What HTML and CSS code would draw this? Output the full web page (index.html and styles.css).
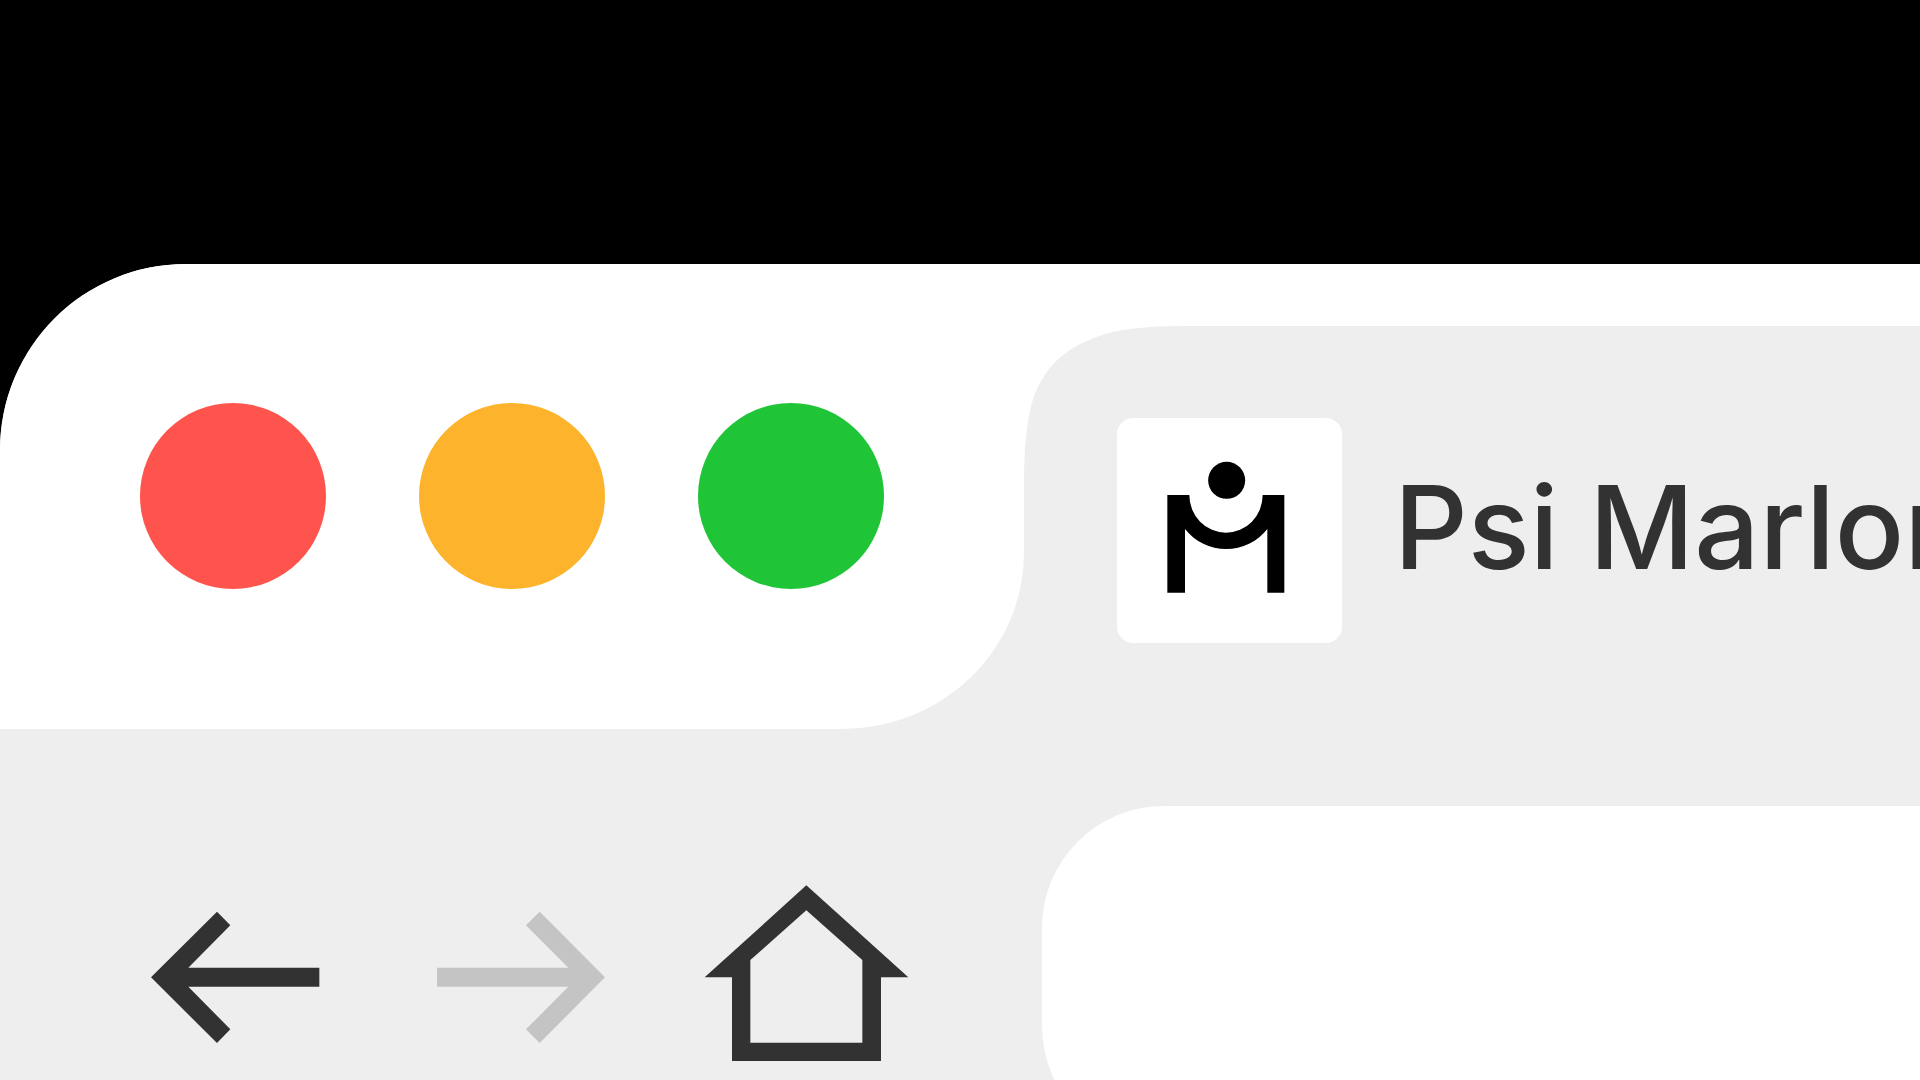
FILE: index.html
```
<!DOCTYPE html>
<html lang="pt-BR">
<head>
  <meta charset="UTF-8">
  <title>Psi Marlon</title>
  <link rel="stylesheet" href="styles.css">
</head>
<body>
  <div class="window">
    <div class="tab-strip">
      <div class="controls">
        <button class="light close" aria-label="Close"></button>
        <button class="light minimize" aria-label="Minimize"></button>
        <button class="light maximize" aria-label="Maximize"></button>
      </div>
      <button class="tab">
        <svg class="favicon" viewBox="50 54 675 675" aria-hidden="true">
          <circle cx="379" cy="241" r="55.5"/>
          <path d="M201 285H267A110 113 0 0 0 487 285H552V578H501V387A157 157 0 0 1 254 387V578H201Z"/>
        </svg>
        <span class="tab-title">Psi Marlon</span>
      </button>
    </div>

    <div class="toolbar">
      <button class="nav-button" aria-label="Back">
        <svg viewBox="-21 15 672 672">
          <path d="M63 352L261 155L301 196L175 323H568V380H175L301 508L261 549Z"/>
        </svg>
      </button>
      <button class="nav-button" aria-label="Forward" disabled>
        <svg viewBox="837 15 672 672">
          <path d="M1425 352L1229 155L1188 196L1315 323H921V380H1315L1188 508L1229 549Z"/>
        </svg>
      </button>
      <button class="nav-button" aria-label="Home">
        <svg viewBox="45 15 672 672">
          <path fill-rule="evenodd" d="M379 76L685 352H603V603H156V352H74ZM379 151L211 300V548H547V300Z"/>
        </svg>
      </button>
      <input class="address" type="text" aria-label="Address">
    </div>
  </div>
</body>
</html>
```
FILE: styles.css
```
body {
  margin: 0;
  height: 100vh;
  overflow: hidden;
  background-color: #000;
  font-family: Inter, "Liberation Sans", sans-serif;
}
button {
  flex-shrink: 0;
  margin: 0;
  padding: 0;
  border: none;
  background: none;
  font-family: inherit;
}
.window {
  margin-top: 264px;
  background-color: #eee;
  border-top-left-radius: 186px;
  overflow: hidden;
}
.tab-strip {
  display: flex;
}
.controls {
  display: flex;
  flex-shrink: 0;
  gap: 93px;
  padding: 139px 140px 140px 140px;
  background-color: #fff;
  border-bottom-right-radius: 182px 176px;
}
.light {
  width: 186px;
  height: 186px;
  border-radius: 50%;
}
.close {
  background-color: #ff544d;
}
.minimize {
  background-color: #fdb42c;
}
.maximize {
  background-color: #20c437;
}
.tab {
  position: relative;
  flex: 1 0 0;
  display: flex;
  align-items: flex-start;
  gap: 52px;
  min-width: 0;
  padding: 92px 0 0 93px;
  border-top: 62px solid #fff;
  overflow: hidden;
}
/* white wedge that rounds the top left corner of the tab */
.tab::before {
  content: "";
  position: absolute;
  top: 0;
  left: 0;
  width: 164px;
  height: 164px;
  background-color: #fff;
  clip-path: path("M0 0H164C120 0 92 3 70 12C40 23 22 41 11 68C3 88 0 120 0 164Z");
}
.favicon {
  position: relative;
  flex-shrink: 0;
  width: 225px;
  height: 225px;
  border-radius: 16px;
  background-color: #fff;
}
.tab-title {
  color: #323232;
  font-size: 115px;
  font-weight: 500;
  line-height: 220px;
  white-space: nowrap;
}
.toolbar {
  display: flex;
  align-items: center;
  gap: 62px;
  padding: 77px 0 77px 123px;
}
.nav-button {
  width: 224px;
  height: 224px;
  color: #323232;
}
.nav-button:disabled {
  color: #c4c4c4;
}
.nav-button svg {
  display: block;
  fill: currentColor;
}
.address {
  flex: 1;
  min-width: 0;
  box-sizing: border-box;
  height: 342px;
  margin-left: 61px;
  padding: 0 93px;
  border: none;
  border-radius: 122px 0 0 122px;
  background-color: #fff;
  color: #323232;
  font-family: inherit;
  font-size: 115px;
}
```
